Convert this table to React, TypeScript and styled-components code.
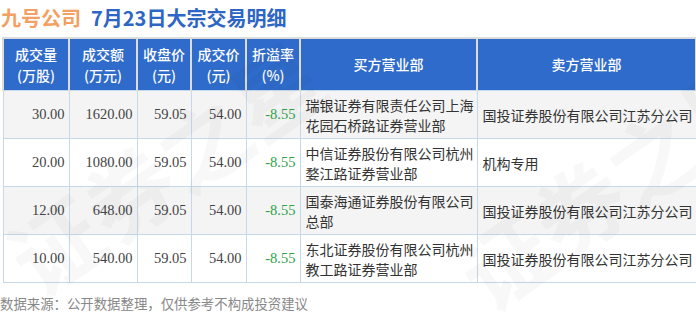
import styled, { createGlobalStyle } from "styled-components";

type Row = {
  volume: string;
  amount: string;
  close: string;
  price: string;
  premium: string;
  buyer: string;
  seller: string;
};

const rows: Row[] = [
  {
    volume: "30.00",
    amount: "1620.00",
    close: "59.05",
    price: "54.00",
    premium: "-8.55",
    buyer: "瑞银证券有限责任公司上海花园石桥路证券营业部",
    seller: "国投证券股份有限公司江苏分公司",
  },
  {
    volume: "20.00",
    amount: "1080.00",
    close: "59.05",
    price: "54.00",
    premium: "-8.55",
    buyer: "中信证券股份有限公司杭州婺江路证券营业部",
    seller: "机构专用",
  },
  {
    volume: "12.00",
    amount: "648.00",
    close: "59.05",
    price: "54.00",
    premium: "-8.55",
    buyer: "国泰海通证券股份有限公司总部",
    seller: "国投证券股份有限公司江苏分公司",
  },
  {
    volume: "10.00",
    amount: "540.00",
    close: "59.05",
    price: "54.00",
    premium: "-8.55",
    buyer: "东北证券股份有限公司杭州教工路证券营业部",
    seller: "国投证券股份有限公司江苏分公司",
  },
];

const headers: { label: string[]; width: number }[] = [
  { label: ["成交量", "(万股)"], width: 66 },
  { label: ["成交额", "(万元)"], width: 68 },
  { label: ["收盘价", "(元)"], width: 54 },
  { label: ["成交价", "(元)"], width: 55 },
  { label: ["折溢率", "(%)"], width: 54 },
  { label: ["买方营业部"], width: 177 },
  { label: ["卖方营业部"], width: 219 },
];

function App() {
  return (
    <Page>
      <GlobalStyle />
      <Title>
        <Company>九号公司</Company>
        <Subject>7月23日大宗交易明细</Subject>
      </Title>
      <Table>
        <colgroup>
          {headers.map((h, i) => (
            <col key={i} style={{ width: h.width }} />
          ))}
        </colgroup>
        <thead>
          <tr>
            {headers.map((h, i) => (
              <Th key={i}>
                {h.label.map((line, j) => (
                  <div key={j}>{line}</div>
                ))}
              </Th>
            ))}
          </tr>
        </thead>
        <tbody>
          {rows.map((r, i) => (
            <Tr key={i} $striped={i % 2 === 0}>
              <Num>{r.volume}</Num>
              <Num>{r.amount}</Num>
              <Num>{r.close}</Num>
              <Num>{r.price}</Num>
              <Num $down>{r.premium}</Num>
              <Text>{r.buyer}</Text>
              <Text>{r.seller}</Text>
            </Tr>
          ))}
        </tbody>
      </Table>
      <Source>数据来源：公开数据整理，仅供参考不构成投资建议</Source>
      <Watermark $x={-20} $y={215}>证券之星</Watermark>
      <Watermark $x={430} $y={230}>证券之星</Watermark>
    </Page>
  );
}

export default App;

const GlobalStyle = createGlobalStyle`
  html, body {
    margin: 0;
    padding: 0;
    background: #ffffff;
  }
  body {
    font-family: "Noto Sans CJK SC", "Noto Sans", sans-serif;
  }
`;

const Page = styled.div`
  position: relative;
  width: 696px;
  height: 316px;
  overflow: hidden;
  background: #fff;
`;

const Title = styled.div`
  display: flex;
  align-items: center;
  gap: 10px;
  height: 37px;
  padding-left: 1px;
  padding-bottom: 2px;
  box-sizing: border-box;
  font-size: 20px;
  font-weight: 700;
  line-height: 1;
`;

const Company = styled.span`
  color: #f4a062;
`;

const Subject = styled.span`
  color: #2d66c4;
`;

const Table = styled.table`
  position: relative;
  z-index: 0;
  margin-left: 2px;
  width: 693px;
  table-layout: fixed;
  border-collapse: collapse;
  font-size: 14px;
`;

const Th = styled.th`
  height: 51px;
  padding: 0;
  background: #2f6bcb;
  color: #fff;
  font-weight: 500;
  font-size: 14px;
  line-height: 21px;
  text-align: center;
  border: 2px solid #dcdcdc;
  border-bottom: 1px solid #c6d8ec;
`;

const Tr = styled.tr<{ $striped: boolean }>`
  height: 48px;
  background: ${(p) => (p.$striped ? "#f4f4f4" : "#ffffff")};
`;

const Num = styled.td<{ $down?: boolean }>`
  padding: 0 4px 0 0;
  text-align: right;
  font-family: "Liberation Serif", "Noto Sans CJK SC", serif;
  font-size: 14.5px;
  color: ${(p) => (p.$down ? "#2ea34a" : "#444")};
  border: 1px solid #c6d8ec;
`;

const Text = styled.td`
  padding: 0 0 0 5px;
  text-align: left;
  color: #333;
  line-height: 20px;
  border: 1px solid #c6d8ec;
`;

const Source = styled.div`
  margin-top: 11px;
  font-size: 13.4px;
  color: #888;
  line-height: 18px;
`;

const Watermark = styled.div<{ $x: number; $y: number }>`
  position: absolute;
  z-index: 1;
  left: ${(p) => p.$x}px;
  top: ${(p) => p.$y}px;
  font-size: 90px;
  font-weight: 700;
  white-space: nowrap;
  color: rgba(0, 0, 0, 0.028);
  transform: rotate(-35deg);
  transform-origin: left top;
  pointer-events: none;
`;
